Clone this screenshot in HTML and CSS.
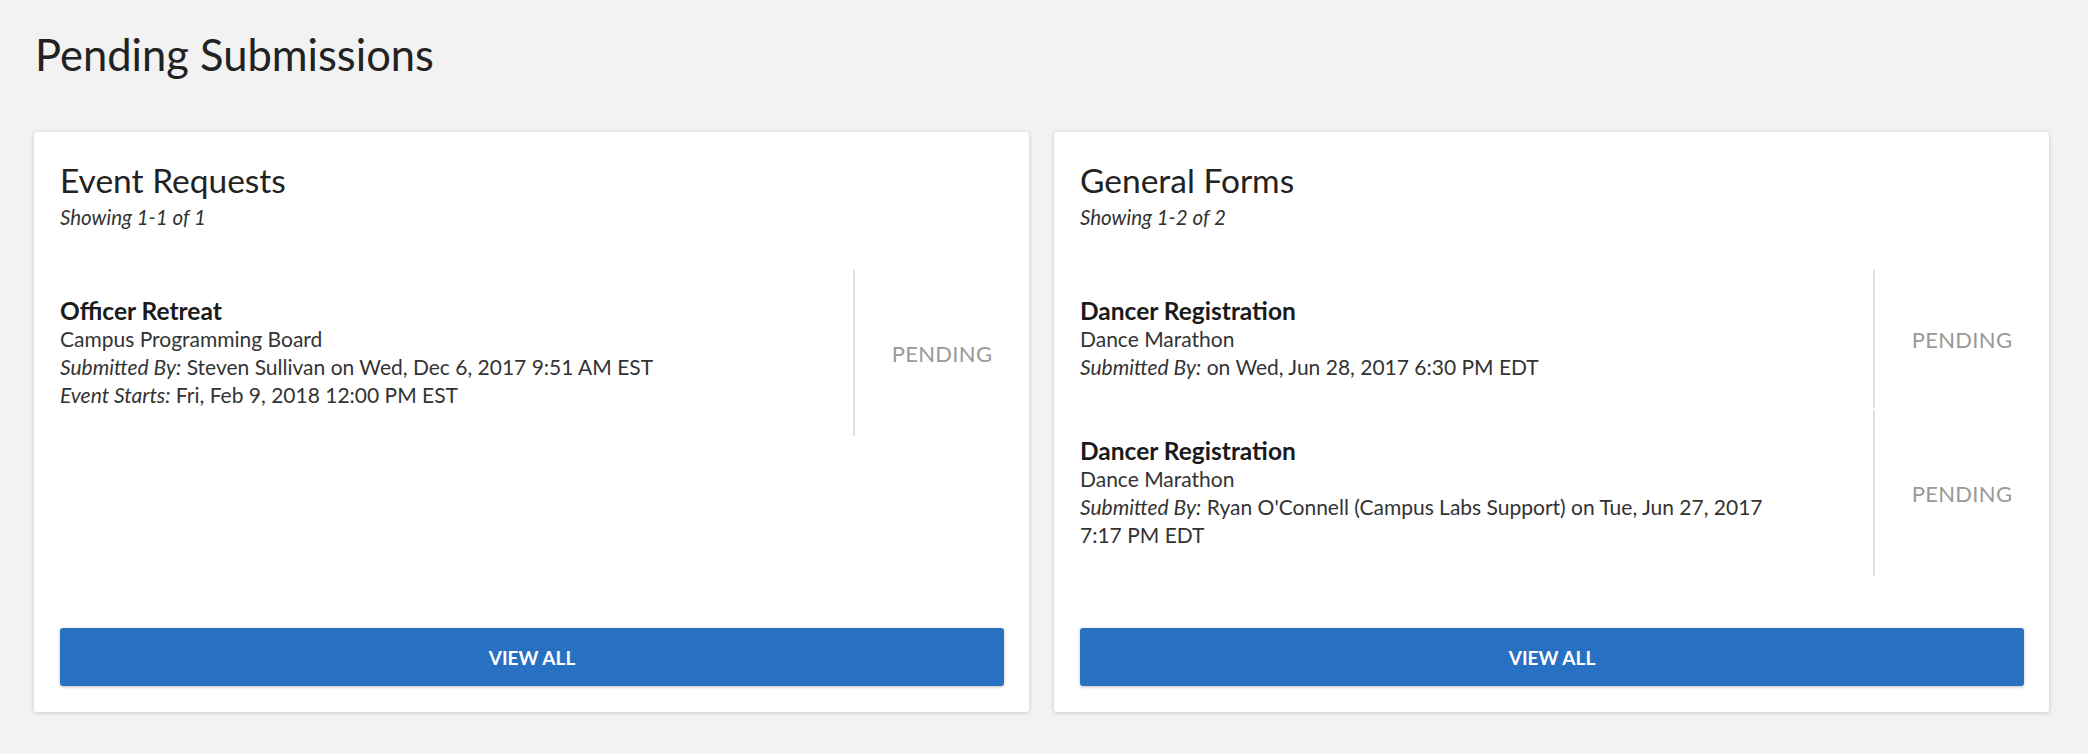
FILE: index.html
```html
<!DOCTYPE html>
<html lang="en">
<head>
<meta charset="utf-8">
<title>Pending Submissions</title>
<link rel="stylesheet" href="styles.css">
</head>
<body>
<main class="page">
  <h1 class="page-title">Pending Submissions</h1>
  <div class="cards">
    <section class="card">
      <header class="card-header">
        <h2 class="card-title">Event Requests</h2>
        <p class="card-count">Showing 1-1 of 1</p>
      </header>
      <ul class="list">
        <li class="item">
          <div class="item-body">
            <div class="item-name">Officer Retreat</div>
            <div class="item-line">Campus Programming Board</div>
            <div class="item-line"><em>Submitted By:</em> Steven Sullivan on Wed, Dec 6, 2017 9:51 AM EST</div>
            <div class="item-line"><em>Event Starts:</em> Fri, Feb 9, 2018 12:00 PM EST</div>
          </div>
          <div class="item-status">PENDING</div>
        </li>
      </ul>
      <a class="btn" href="#">VIEW ALL</a>
    </section>
    <section class="card">
      <header class="card-header">
        <h2 class="card-title">General Forms</h2>
        <p class="card-count">Showing 1-2 of 2</p>
      </header>
      <ul class="list">
        <li class="item">
          <div class="item-body">
            <div class="item-name">Dancer Registration</div>
            <div class="item-line">Dance Marathon</div>
            <div class="item-line"><em>Submitted By:</em> on Wed, Jun 28, 2017 6:30 PM EDT</div>
          </div>
          <div class="item-status">PENDING</div>
        </li>
        <li class="item">
          <div class="item-body">
            <div class="item-name">Dancer Registration</div>
            <div class="item-line">Dance Marathon</div>
            <div class="item-line"><em>Submitted By:</em> Ryan O'Connell (Campus Labs Support) on Tue, Jun 27, 2017<br>7:17 PM EDT</div>
          </div>
          <div class="item-status">PENDING</div>
        </li>
      </ul>
      <a class="btn" href="#">VIEW ALL</a>
    </section>
  </div>
</main>
</body>
</html>
```

FILE: styles.css
```css
* {
  box-sizing: border-box;
}

html, body {
  margin: 0;
  padding: 0;
  background: #f2f2f2;
}

body {
  font-family: Lato, "Noto Sans", "Liberation Sans", sans-serif;
  color: #333;
}

.page {
  padding: 24px 39px 42px 34px;
}

.page-title {
  margin: 0 0 0 1px;
  font-size: 43.5px;
  font-weight: 400;
  line-height: 60px;
  color: #222;
}

.cards {
  display: grid;
  grid-template-columns: 1fr 1fr;
  gap: 25px;
  margin-top: 48px;
}

.card {
  display: flex;
  flex-direction: column;
  background: #fff;
  border-radius: 3px;
  box-shadow: 0 1px 4px rgba(0, 0, 0, 0.18);
  padding: 28px 25px 26px 26px;
}

.card-title {
  margin: 0;
  font-size: 33.5px;
  font-weight: 400;
  line-height: 1.2;
  color: #222;
}

.card-count {
  margin: 3px 0 0;
  font-size: 20.5px;
  font-style: italic;
  line-height: 28px;
  color: #333;
}

.list {
  list-style: none;
  margin: 39px -25px 52px 0;
  padding: 0;
  display: flex;
  flex-direction: column;
  gap: 2px;
}

.item {
  display: flex;
}

.item-body {
  flex: 1 1 auto;
  padding: 27px 0;
  font-size: 21px;
  line-height: 28px;
  color: #333;
}

.item-name {
  font-size: 24.5px;
  font-weight: 700;
  color: #1a1a1a;
}

.item-line em {
  font-style: italic;
}

.item-status {
  flex: 0 0 176px;
  border-left: 2px solid #e0e0e0;
  display: flex;
  align-items: center;
  justify-content: center;
  font-size: 22px;
  color: #999;
  letter-spacing: 0.3px;
}

.btn {
  margin-top: auto;
  display: flex;
  align-items: center;
  justify-content: center;
  height: 58px;
  background: #2870c2;
  color: #fff;
  border-radius: 3px;
  box-shadow: 0 1px 3px rgba(0, 0, 0, 0.25);
  text-decoration: none;
  font-size: 19px;
  font-weight: 700;
}
```
